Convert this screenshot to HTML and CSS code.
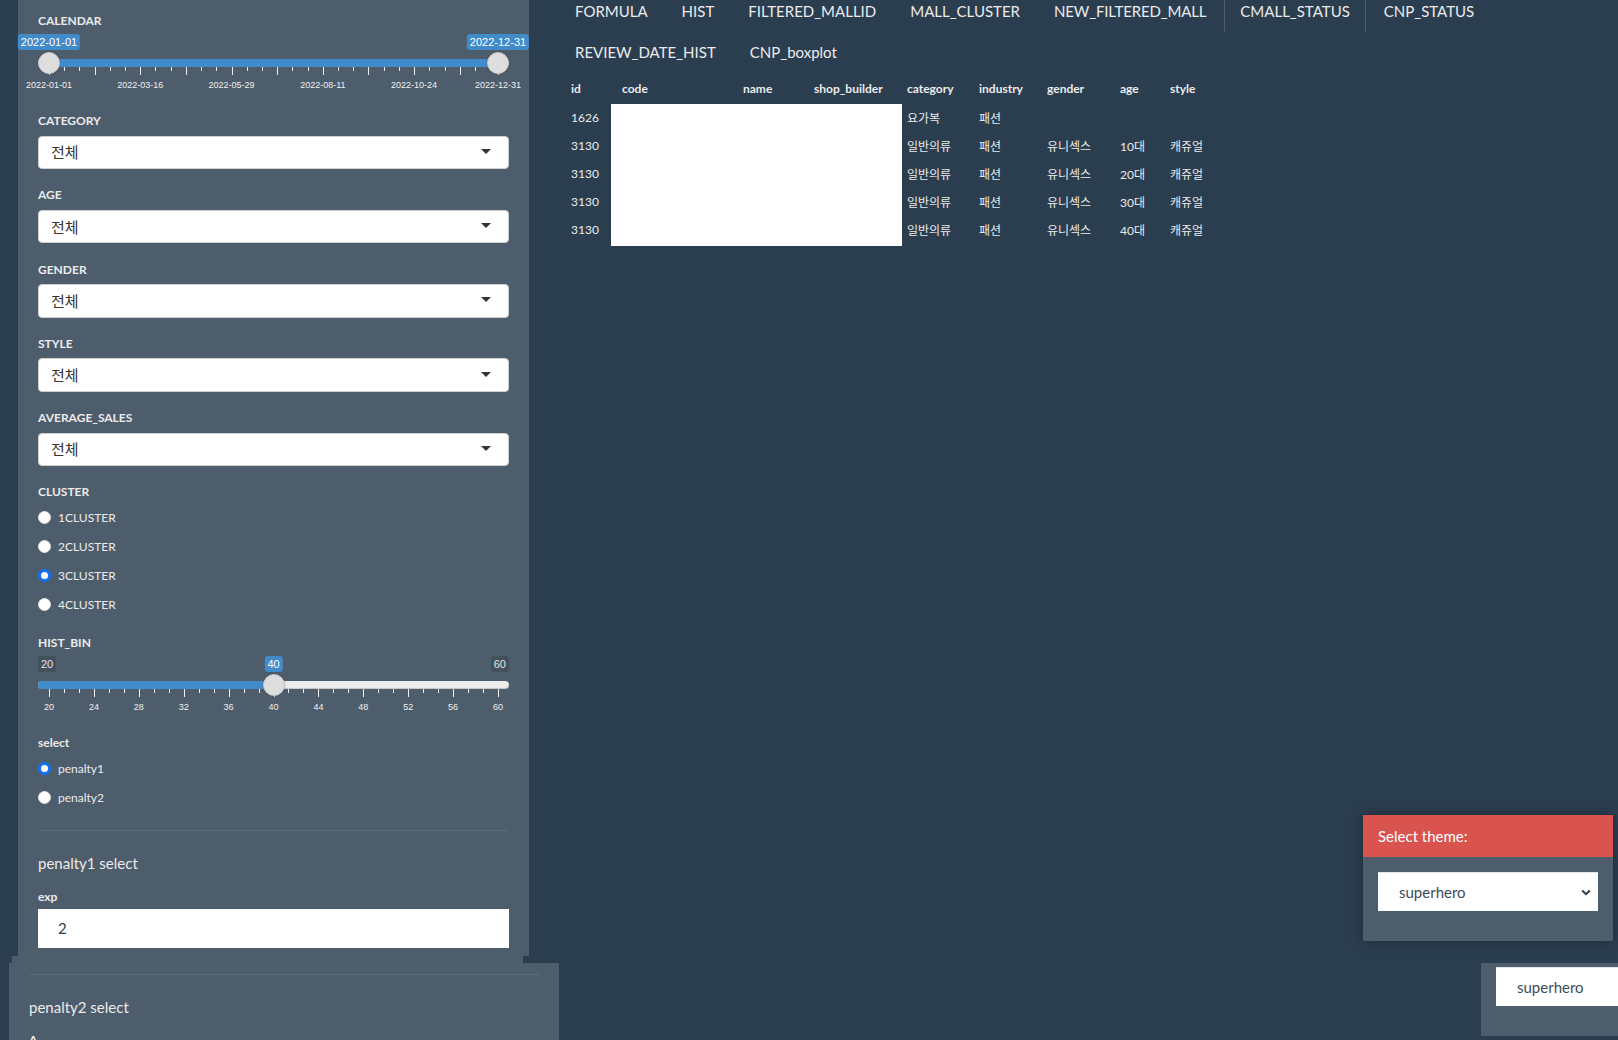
FILE: index.html
```html
<!DOCTYPE html>
<html lang="ko">
<head>
<meta charset="utf-8">
<title>Dashboard</title>
<link rel="stylesheet" href="styles.css">
</head>
<body>
<div class="page">
  <aside class="sidebar">
    <div class="slider-group">
      <label class="ctl-label">CALENDAR</label>
      <div class="irs">
        <div class="irs-line"></div>
        <div class="irs-bar irs-bar-range"></div>
        <div class="irs-grid">
          <span class="tick" style="--x:0%"></span>
          <span class="tick s" style="--x:3.388%"></span>
          <span class="tick s" style="--x:6.777%"></span>
          <span class="tick" style="--x:10.165%"></span>
          <span class="tick s" style="--x:13.553%"></span>
          <span class="tick s" style="--x:16.941%"></span>
          <span class="tick" style="--x:20.330%"></span>
          <span class="tick s" style="--x:23.718%"></span>
          <span class="tick s" style="--x:27.106%"></span>
          <span class="tick" style="--x:30.495%"></span>
          <span class="tick s" style="--x:33.883%"></span>
          <span class="tick s" style="--x:37.271%"></span>
          <span class="tick" style="--x:40.659%"></span>
          <span class="tick s" style="--x:44.048%"></span>
          <span class="tick s" style="--x:47.436%"></span>
          <span class="tick" style="--x:50.824%"></span>
          <span class="tick s" style="--x:54.213%"></span>
          <span class="tick s" style="--x:57.601%"></span>
          <span class="tick" style="--x:60.989%"></span>
          <span class="tick s" style="--x:64.377%"></span>
          <span class="tick s" style="--x:67.766%"></span>
          <span class="tick" style="--x:71.154%"></span>
          <span class="tick s" style="--x:74.542%"></span>
          <span class="tick s" style="--x:77.930%"></span>
          <span class="tick" style="--x:81.319%"></span>
          <span class="tick s" style="--x:84.707%"></span>
          <span class="tick s" style="--x:88.095%"></span>
          <span class="tick" style="--x:91.484%"></span>
          <span class="tick s" style="--x:94.872%"></span>
          <span class="tick s" style="--x:98.260%"></span>
          <span class="tick" style="--x:100%"></span>
          <span class="gtext" style="--x:0%">2022-01-01</span>
          <span class="gtext" style="--x:20.330%">2022-03-16</span>
          <span class="gtext" style="--x:40.659%">2022-05-29</span>
          <span class="gtext" style="--x:60.989%">2022-08-11</span>
          <span class="gtext" style="--x:81.319%">2022-10-24</span>
          <span class="gtext" style="--x:100%">2022-12-31</span>
        </div>
        <span class="bubble" style="--p:0">2022-01-01</span>
        <span class="bubble" style="--p:1">2022-12-31</span>
        <span class="handle" style="--p:0"></span>
        <span class="handle" style="--p:1"></span>
      </div>
    </div>

    <div class="select-group">
      <label class="ctl-label">CATEGORY</label>
      <div class="selectbox"><span class="sel-text">전체</span><span class="caret"></span></div>
    </div>
    <div class="select-group">
      <label class="ctl-label">AGE</label>
      <div class="selectbox"><span class="sel-text">전체</span><span class="caret"></span></div>
    </div>
    <div class="select-group">
      <label class="ctl-label">GENDER</label>
      <div class="selectbox"><span class="sel-text">전체</span><span class="caret"></span></div>
    </div>
    <div class="select-group">
      <label class="ctl-label">STYLE</label>
      <div class="selectbox"><span class="sel-text">전체</span><span class="caret"></span></div>
    </div>
    <div class="select-group">
      <label class="ctl-label">AVERAGE_SALES</label>
      <div class="selectbox"><span class="sel-text">전체</span><span class="caret"></span></div>
    </div>

    <div class="radio-group cluster-group">
      <label class="ctl-label">CLUSTER</label>
      <label class="radio-row"><input type="radio" name="cluster"><span>1CLUSTER</span></label>
      <label class="radio-row"><input type="radio" name="cluster"><span>2CLUSTER</span></label>
      <label class="radio-row"><input type="radio" name="cluster" checked><span>3CLUSTER</span></label>
      <label class="radio-row"><input type="radio" name="cluster"><span>4CLUSTER</span></label>
    </div>

    <div class="slider-group">
      <label class="ctl-label">HIST_BIN</label>
      <div class="irs">
        <div class="irs-line"></div>
        <div class="irs-bar irs-bar-single" style="--p:0.5"></div>
        <div class="irs-grid">
          <span class="tick" style="--x:0%"></span>
          <span class="tick s" style="--x:3.333%"></span>
          <span class="tick s" style="--x:6.667%"></span>
          <span class="tick" style="--x:10%"></span>
          <span class="tick s" style="--x:13.333%"></span>
          <span class="tick s" style="--x:16.667%"></span>
          <span class="tick" style="--x:20%"></span>
          <span class="tick s" style="--x:23.333%"></span>
          <span class="tick s" style="--x:26.667%"></span>
          <span class="tick" style="--x:30%"></span>
          <span class="tick s" style="--x:33.333%"></span>
          <span class="tick s" style="--x:36.667%"></span>
          <span class="tick" style="--x:40%"></span>
          <span class="tick s" style="--x:43.333%"></span>
          <span class="tick s" style="--x:46.667%"></span>
          <span class="tick" style="--x:50%"></span>
          <span class="tick s" style="--x:53.333%"></span>
          <span class="tick s" style="--x:56.667%"></span>
          <span class="tick" style="--x:60%"></span>
          <span class="tick s" style="--x:63.333%"></span>
          <span class="tick s" style="--x:66.667%"></span>
          <span class="tick" style="--x:70%"></span>
          <span class="tick s" style="--x:73.333%"></span>
          <span class="tick s" style="--x:76.667%"></span>
          <span class="tick" style="--x:80%"></span>
          <span class="tick s" style="--x:83.333%"></span>
          <span class="tick s" style="--x:86.667%"></span>
          <span class="tick" style="--x:90%"></span>
          <span class="tick s" style="--x:93.333%"></span>
          <span class="tick s" style="--x:96.667%"></span>
          <span class="tick" style="--x:100%"></span>
          <span class="gtext" style="--x:0%">20</span>
          <span class="gtext" style="--x:10%">24</span>
          <span class="gtext" style="--x:20%">28</span>
          <span class="gtext" style="--x:30%">32</span>
          <span class="gtext" style="--x:40%">36</span>
          <span class="gtext" style="--x:50%">40</span>
          <span class="gtext" style="--x:60%">44</span>
          <span class="gtext" style="--x:70%">48</span>
          <span class="gtext" style="--x:80%">52</span>
          <span class="gtext" style="--x:90%">56</span>
          <span class="gtext" style="--x:100%">60</span>
        </div>
        <span class="bubble minmax min">20</span>
        <span class="bubble minmax max">60</span>
        <span class="bubble" style="--p:0.5">40</span>
        <span class="handle" style="--p:0.5"></span>
      </div>
    </div>

    <div class="radio-group penalty-group">
      <label class="ctl-label">select</label>
      <label class="radio-row"><input type="radio" name="pen" checked><span>penalty1</span></label>
      <label class="radio-row"><input type="radio" name="pen"><span>penalty2</span></label>
    </div>

    <div class="divider"></div>
    <div class="sub-title">penalty1 select</div>
    <label class="ctl-label exp-label">exp</label>
    <div class="num-input">2</div>
  </aside>

  <main class="main">
    <ul class="tabs">
      <li><a href="#">FORMULA</a></li>
      <li><a href="#">HIST</a></li>
      <li><a href="#">FILTERED_MALLID</a></li>
      <li><a href="#">MALL_CLUSTER</a></li>
      <li><a href="#" class="tight">NEW_FILTERED_MALL</a></li>
      <li class="active"><a href="#">CMALL_STATUS</a></li>
      <li><a href="#">CNP_STATUS</a></li>
      <li><a href="#">REVIEW_DATE_HIST</a></li>
      <li><a href="#">CNP_boxplot</a></li>
    </ul>

    <div class="table-wrap">
      <table class="data">
        <colgroup>
          <col class="c-id"><col class="c-code"><col class="c-name"><col class="c-shop"><col class="c-cat"><col class="c-ind"><col class="c-gen"><col class="c-age"><col class="c-style">
        </colgroup>
        <thead>
          <tr><th class="first">id</th><th>code</th><th>name</th><th>shop_builder</th><th>category</th><th>industry</th><th>gender</th><th>age</th><th>style</th></tr>
        </thead>
        <tbody>
          <tr><td class="first">1626</td><td></td><td></td><td></td><td>요가복</td><td>패션</td><td></td><td></td><td></td></tr>
          <tr><td class="first">3130</td><td></td><td></td><td></td><td>일반의류</td><td>패션</td><td>유니섹스</td><td>10대</td><td>캐쥬얼</td></tr>
          <tr><td class="first">3130</td><td></td><td></td><td></td><td>일반의류</td><td>패션</td><td>유니섹스</td><td>20대</td><td>캐쥬얼</td></tr>
          <tr><td class="first">3130</td><td></td><td></td><td></td><td>일반의류</td><td>패션</td><td>유니섹스</td><td>30대</td><td>캐쥬얼</td></tr>
          <tr><td class="first">3130</td><td></td><td></td><td></td><td>일반의류</td><td>패션</td><td>유니섹스</td><td>40대</td><td>캐쥬얼</td></tr>
        </tbody>
      </table>
      <div class="redact"></div>
    </div>
  </main>
</div>

<div class="bottom-panel">
  <div class="divider"></div>
  <div class="sub-title">penalty2 select</div>
  <label class="ctl-label">A</label>
</div>

<div class="theme-panel">
  <div class="theme-head">Select theme:</div>
  <div class="theme-body">
    <div class="theme-select">
      <span>superhero</span>
      <svg class="chev" width="10" height="7" viewBox="0 0 10 7"><polyline points="1.2,1.5 5,5.2 8.8,1.5" fill="none" stroke="#2b3e50" stroke-width="2"/></svg>
    </div>
  </div>
</div>

<div class="theme-mini">
  <div class="mini-select">superhero</div>
</div>
</body>
</html>
```
FILE: styles.css
```css
* { box-sizing: border-box; }
html, body { margin: 0; padding: 0; }
body {
  width: 1618px;
  height: 1040px;
  overflow: hidden;
  position: relative;
  background: #2b3e50;
  color: #ebebeb;
  font-family: Lato, "Noto Sans CJK KR", sans-serif;
  font-size: 15px;
}
.page { display: flex; align-items: flex-start; }

/* ---------- sidebar ---------- */
.sidebar {
  flex: none;
  margin-left: 18px;
  width: 511px;
  background: #4e5d6c;
  padding: 11px 20px 8px 20px;
}
.ctl-label {
  display: block;
  font-size: 12px;
  font-weight: 700;
  line-height: 20px;
  height: 20px;
  color: #ebebeb;
}
.slider-group { margin-bottom: 16px; }

.irs { position: relative; height: 64px; }
.irs-line {
  position: absolute; left: 0; right: 0; top: 28px; height: 8px;
  background: #ededed; border-radius: 8px;
  box-shadow: inset 0 -1px 1px rgba(0,0,0,.18);
}
.irs-bar { position: absolute; top: 28px; height: 8px; background: #428bca; }
.irs-bar-range { left: 11px; right: 11px; }
.irs-bar-single { left: 0; width: calc(11px + (100% - 22px) * var(--p)); border-radius: 8px 0 0 8px; }
.handle {
  position: absolute; top: 21px; width: 22px; height: 22px; border-radius: 50%;
  left: calc((100% - 22px) * var(--p));
  background: #dedede; border: 1px solid #c9c9c9;
  box-shadow: 0 0 2px rgba(0,0,0,.25);
}
.bubble {
  position: absolute; top: 3px;
  left: calc(11px + (100% - 22px) * var(--p));
  transform: translateX(-50%);
  background: #428bca; color: #fff;
  font: 11px/14px Arial, "Liberation Sans", sans-serif;
  padding: 1px 3px; border-radius: 3px; white-space: nowrap;
}
.bubble.minmax { transform: none; background: rgba(0,0,0,.13); color: #e4e4e4; }
.bubble.min { left: 0; }
.bubble.max { left: auto; right: 0; }
.irs-grid { position: absolute; left: 11px; right: 11px; top: 36px; height: 27px; }
.tick { position: absolute; top: 0; left: var(--x); width: 1px; height: 8px; background: #ececec; }
.tick.s { height: 4px; }
.gtext {
  position: absolute; top: 13px; left: var(--x); transform: translateX(-50%);
  font: 9px/11px Arial, "Liberation Sans", sans-serif; color: #f0f0f0; white-space: nowrap;
}

.select-group { margin-bottom: 16.3px; }
.select-group .ctl-label { margin-bottom: 4.5px; }
.selectbox {
  display: flex; align-items: center;
  height: 33.5px; background: #fff;
  border: 1px solid #d0d0d0; border-radius: 4px;
  padding: 0 0 0 12px;
  color: #333; font-size: 15px;
}
.sel-text { font-family: "Noto Sans CJK KR", sans-serif; font-size: 15px; line-height: 20px; }
.caret {
  margin-left: auto; margin-right: 17px; margin-top: -2px;
  width: 0; height: 0;
  border-left: 5px solid transparent; border-right: 5px solid transparent;
  border-top: 5px solid #333;
}

.radio-group .ctl-label { margin-bottom: 5px; }
.radio-row {
  display: flex; align-items: center; height: 20px;
  font-size: 12px; color: #ebebeb;
}
.radio-row + .radio-row { margin-top: 9px; }
.radio-row input {
  appearance: none; -webkit-appearance: none;
  width: 13px; height: 13px; margin: 0 7px 0 0; flex: none;
  border-radius: 50%; background: #fff; border: 1px solid #e2e2e2;
}
.radio-row input:checked { border: 3px solid #1070f5; }
.cluster-group { margin-bottom: 19px; }
.penalty-group { margin-bottom: 22.5px; }

.divider { height: 1px; background: #5b6a79; margin-bottom: 21.7px; }
.sub-title { font-size: 15px; line-height: 20px; margin-bottom: 14px; }
.exp-label { margin-bottom: 2.3px; }
.num-input {
  height: 39px; background: #fff; color: #2b3e50;
  display: flex; align-items: center; padding: 0 20px; font-size: 15px;
}

/* ---------- main ---------- */
.main { flex: none; margin-left: 30px; width: 1044px; margin-top: -10px; }
.tabs { display: flex; flex-wrap: wrap; list-style: none; margin: 0; padding: 0; }
.tabs li { margin-bottom: -1px; }
.tabs a {
  display: block; padding: 10px 15px; line-height: 20px;
  border: 1px solid transparent; border-radius: 4px 4px 0 0;
  margin-right: 2px; color: #ebebeb; text-decoration: none; font-size: 15px;
}
.tabs a.tight { letter-spacing: -0.15px; }
.tabs li.active a { border-color: #4e5d6c; border-bottom-color: transparent; }

.table-wrap { position: relative; margin-top: 2px; }
.data { border-collapse: collapse; table-layout: fixed; width: 661px; font-size: 12px; }
.data th, .data td { padding: 0 0 0 10px; text-align: left; white-space: nowrap; }
.data th { font-weight: 700; height: 29px; }
.data td { height: 28px; }
.data .first { padding-left: 12px; }
.c-id { width: 53px; } .c-code { width: 121px; } .c-name { width: 71px; } .c-shop { width: 93px; }
.c-cat { width: 72px; } .c-ind { width: 68px; } .c-gen { width: 73px; } .c-age { width: 50px; } .c-style { width: 60px; }
.redact { position: absolute; left: 52px; top: 29.7px; width: 291px; height: 142px; background: #fff; }

/* ---------- overlays ---------- */
.bottom-panel {
  position: absolute; left: 9px; top: 963px; width: 550px; height: 90px;
  background: #4e5d6c; padding: 11px 19px 0 20px;
}
.bottom-panel::before {
  content: ""; position: absolute; left: 3px; top: -7.5px; width: 511px; height: 8px; background: #4e5d6c;
}
.bottom-panel .divider { margin-bottom: 22px; }
.bottom-panel .sub-title { margin-bottom: 13px; }

.theme-panel {
  position: absolute; left: 1363px; top: 815px; width: 250px;
  background: #4e5d6c; box-shadow: 0 0 12px rgba(0,0,0,.35);
}
.theme-head { background: #d9534f; height: 42px; line-height: 42px; padding: 0 15px; color: #fff; font-size: 15px; }
.theme-body { padding: 15px 15px 30px; }
.theme-select {
  height: 39px; background: #fff; display: flex; align-items: center;
  padding: 0 7px 0 21px; color: #3d4c5b; font-size: 15px; border-top: 1px solid #e6e6e6;
}
.chev { margin-left: auto; }

.theme-mini {
  position: absolute; left: 1481px; top: 963px; width: 137px; height: 73px;
  background: #4e5d6c; padding: 4px 0 0 15px;
}
.mini-select {
  height: 39px; background: #fff; line-height: 39px; padding-left: 21px;
  color: #3d4c5b; font-size: 15px; border-top: 1px solid #e6e6e6;
}
```
